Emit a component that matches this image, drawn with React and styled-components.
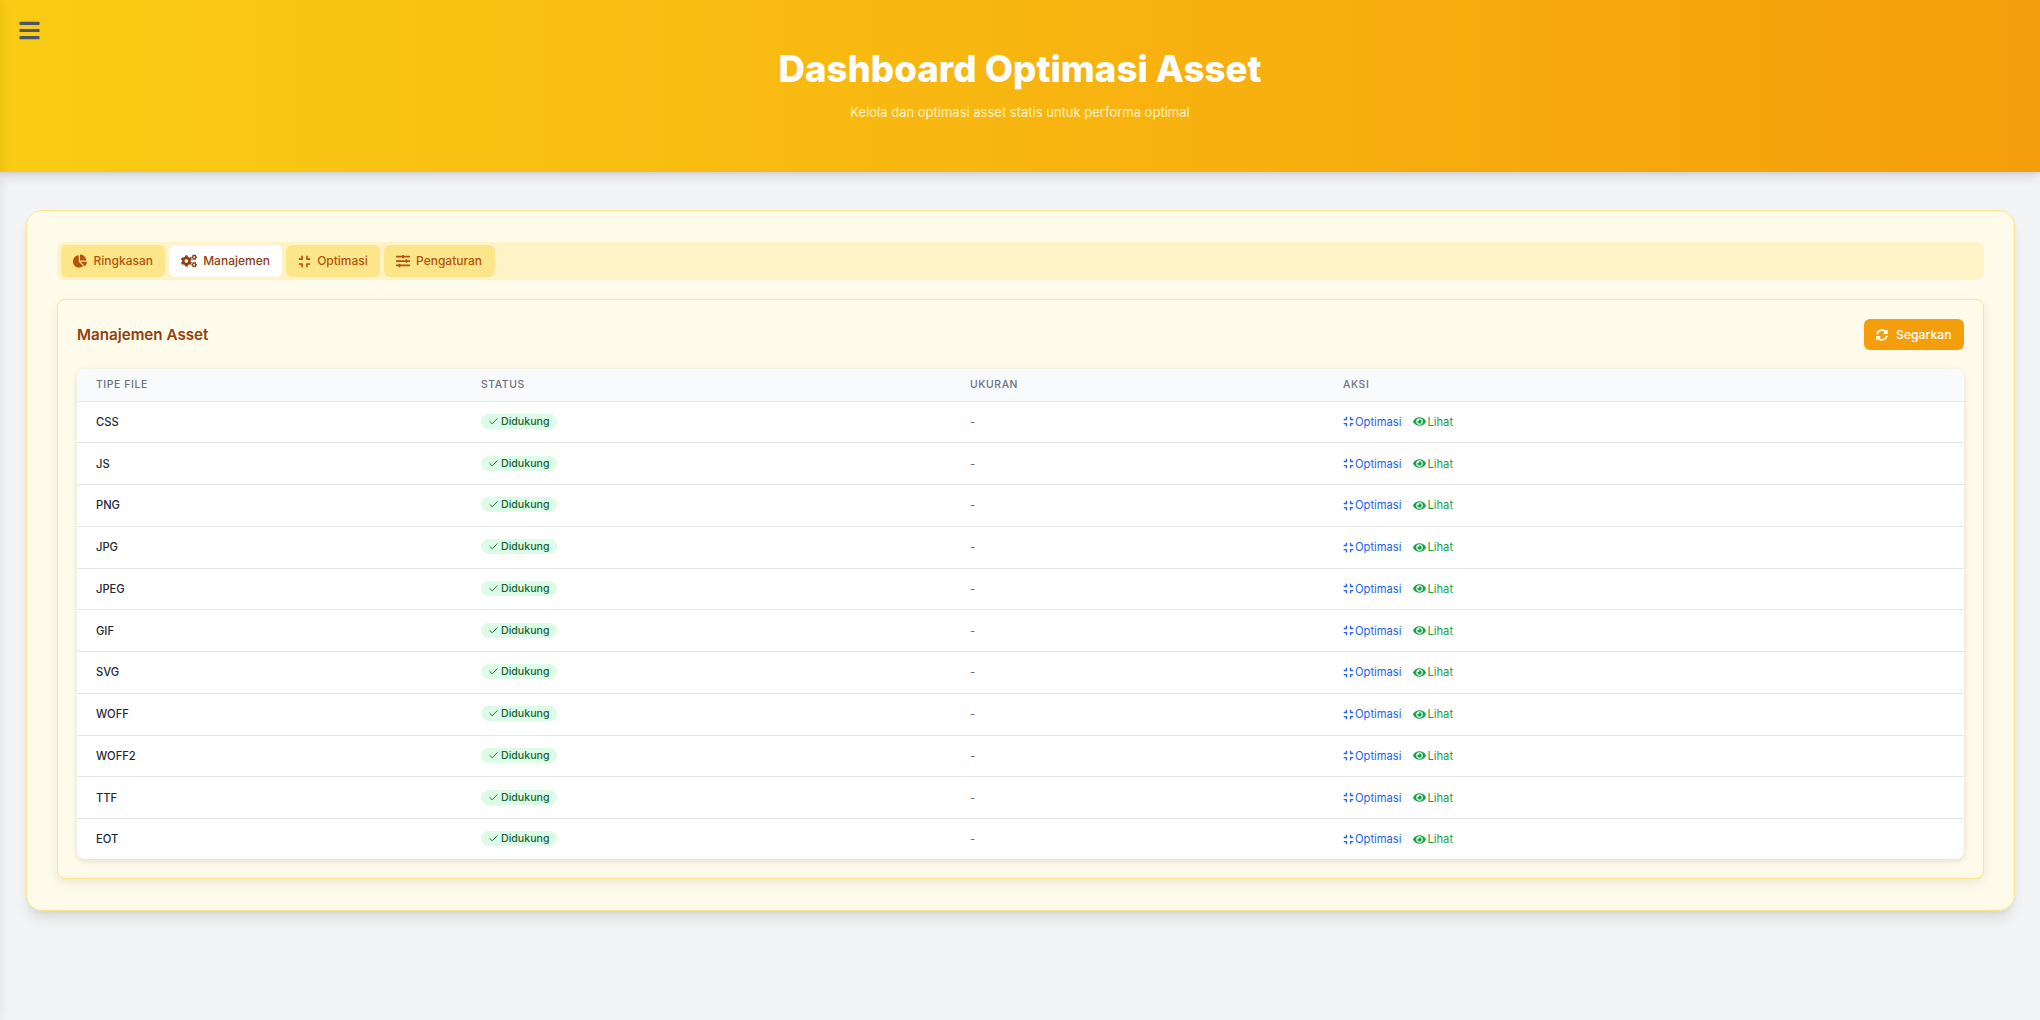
import React from "react";
import styled, { createGlobalStyle } from "styled-components";
import { FaBars, FaChartPie, FaCogs, FaCompress, FaSlidersH, FaSyncAlt, FaEye } from "react-icons/fa";
import { Check } from "lucide-react";

const Global = createGlobalStyle`
  html, body { margin: 0; padding: 0; background: #f3f4f6; }
  body { font-family: Inter, "Liberation Sans", sans-serif; min-height: 1020px; overflow-x: hidden; }
  * { box-sizing: border-box; }
`;
const HiddenSidebar = styled.aside`
  position: fixed; left: -260px; top: 0; bottom: 0; width: 260px; background: #fff; z-index: 5;
  box-shadow: 2px 0 10px rgba(0,0,0,.07);
`;
const Header = styled.header`
  position: relative; height: 172px; background: linear-gradient(90deg, #facc15, #f59e0b);
  box-shadow: 0 4px 12px rgba(0,0,0,.12), 0 2px 4px rgba(0,0,0,.06);
  display: flex; flex-direction: column; align-items: center; padding-top: 46px; color: #fff;
`;
const Menu = styled.button`
  position: absolute; left: 17.5px; top: 19px; padding: 0; border: 0; background: none; color: #4b5563; display: flex;
  font-size: 23px;
`;
const Title = styled.h1`margin: 0; font-size: 36.7px; line-height: 46px; font-weight: 800;`;
const Sub = styled.p`margin: 10px 0 0; font-size: 13px; line-height: 20px; color: #fef3c7;`;
const Main = styled.main`padding: 38px 25px 0 25.6px;`;
const Panel = styled.section`
  background: #fffbeb; border: 1px solid #fde68a; border-radius: 16px; padding: 31px 30px 31px 30.4px; height: 701px;
  box-shadow: 0 10px 15px -3px rgba(0,0,0,.1), 0 4px 6px -2px rgba(0,0,0,.05);
`;
const Tabs = styled.nav`display: flex; gap: 3.2px; padding: 3px 4px; background: #fef3c7; border-radius: 8px; height: 38px;`;
const Tab = styled.button`
  display: flex; align-items: center; gap: 6px; height: 32px; padding: 0 12.5px; border: 0; border-radius: 6px;
  font: 500 12px/20px Inter, sans-serif; background: ${p => p.$active ? "#fff" : "#fde68a"}; color: ${p => p.$active ? "#92400e" : "#b45309"};
  svg { font-size: ${p => p.$icon}px; }
`;
const Card = styled.div`
  margin-top: 19px; background: #fffbeb; border: 1px solid #fde68a; border-radius: 8px; padding: 19px;
  box-shadow: 0 4px 12px rgba(0,0,0,.08);
`;
const CardHead = styled.div`display: flex; align-items: center; justify-content: space-between; height: 31px; margin-bottom: 19px;`;
const CardTitle = styled.h2`margin: 0; font-size: 15.2px; font-weight: 600; color: #92400e;`;
const Refresh = styled.button`
  display: flex; align-items: center; gap: 8px; height: 31px; padding: 0 12.5px; border: 0; border-radius: 6px; background: #f59e0b; color: #fff;
  font: 500 12.2px/20px Inter, sans-serif; svg { font-size: 12px; }
`;
const Table = styled.table`
  width: 100%; border-collapse: collapse; background: #fff; border-radius: 8px; overflow: hidden; table-layout: fixed;
  box-shadow: 0 2px 6px rgba(0,0,0,.12);
`;
const Th = styled.th`
  width: ${p => p.$w || "auto"}; height: 32px; padding: 0 19px; background: #f9fafb; text-align: left; font-size: 10.4px; font-weight: 500; letter-spacing: .6px;
  color: #6b7280; border-bottom: 1px solid #e5e7eb;
`;
const Td = styled.td`
  height: 41.75px; padding: 0 19px; font-size: 11.2px; font-weight: 500; color: ${p => p.$muted ? "#6b7280" : "#1f2937"}; border-bottom: 1px solid #e5e7eb;
  tr:last-child & { border-bottom: 0; height: 40.6px; }
`;
const Badge = styled.span`
  display: inline-flex; align-items: center; gap: 2px; height: 15px; padding: 0 8px 0 7px; border-radius: 999px; background: #dcfce7; color: #166534;
  font-size: 10.6px; font-weight: 500;
`;
const Actions = styled.div`display: flex; gap: 12px;`;
const Action = styled.span`
  display: inline-flex; align-items: center; gap: 1px; font-size: 11.2px; font-weight: 400; color: ${p => p.$color}; svg { font-size: ${p => p.$icon}px; }
`;
const types = ["CSS","JS","PNG","JPG","JPEG","GIF","SVG","WOFF","WOFF2","TTF","EOT"];
const tabs = [["Ringkasan", FaChartPie, 14],["Manajemen", FaCogs, 16, true],["Optimasi", FaCompress, 13],["Pengaturan", FaSlidersH, 14]];

export default function App() {
  return (
    <>
      <Global />
      <HiddenSidebar />
      <Header>
        <Menu aria-label="menu"><FaBars /></Menu>
        <Title>Dashboard Optimasi Asset</Title>
        <Sub>Kelola dan optimasi asset statis untuk performa optimal</Sub>
      </Header>
      <Main>
        <Panel>
          <Tabs>
            {tabs.map(([label, Icon, size, active]) => (
              <Tab key={label} $active={active} $icon={size}><Icon />{label}</Tab>
            ))}
          </Tabs>
          <Card>
            <CardHead>
              <CardTitle>Manajemen Asset</CardTitle>
              <Refresh><FaSyncAlt />Segarkan</Refresh>
            </CardHead>
            <Table>
              <thead>
                <tr><Th $w="385px">TIPE FILE</Th><Th $w="489px">STATUS</Th><Th $w="373px">UKURAN</Th><Th>AKSI</Th></tr>
              </thead>
              <tbody>
                {types.map(t => (
                  <tr key={t}>
                    <Td>{t}</Td>
                    <Td><Badge><Check size={11} strokeWidth={2} />Didukung</Badge></Td>
                    <Td $muted>-</Td>
                    <Td>
                      <Actions>
                        <Action $color="#2563eb" $icon={11}><FaCompress />Optimasi</Action>
                        <Action $color="#16a34a" $icon={13}><FaEye />Lihat</Action>
                      </Actions>
                    </Td>
                  </tr>
                ))}
              </tbody>
            </Table>
          </Card>
        </Panel>
      </Main>
    </>
  );
}
